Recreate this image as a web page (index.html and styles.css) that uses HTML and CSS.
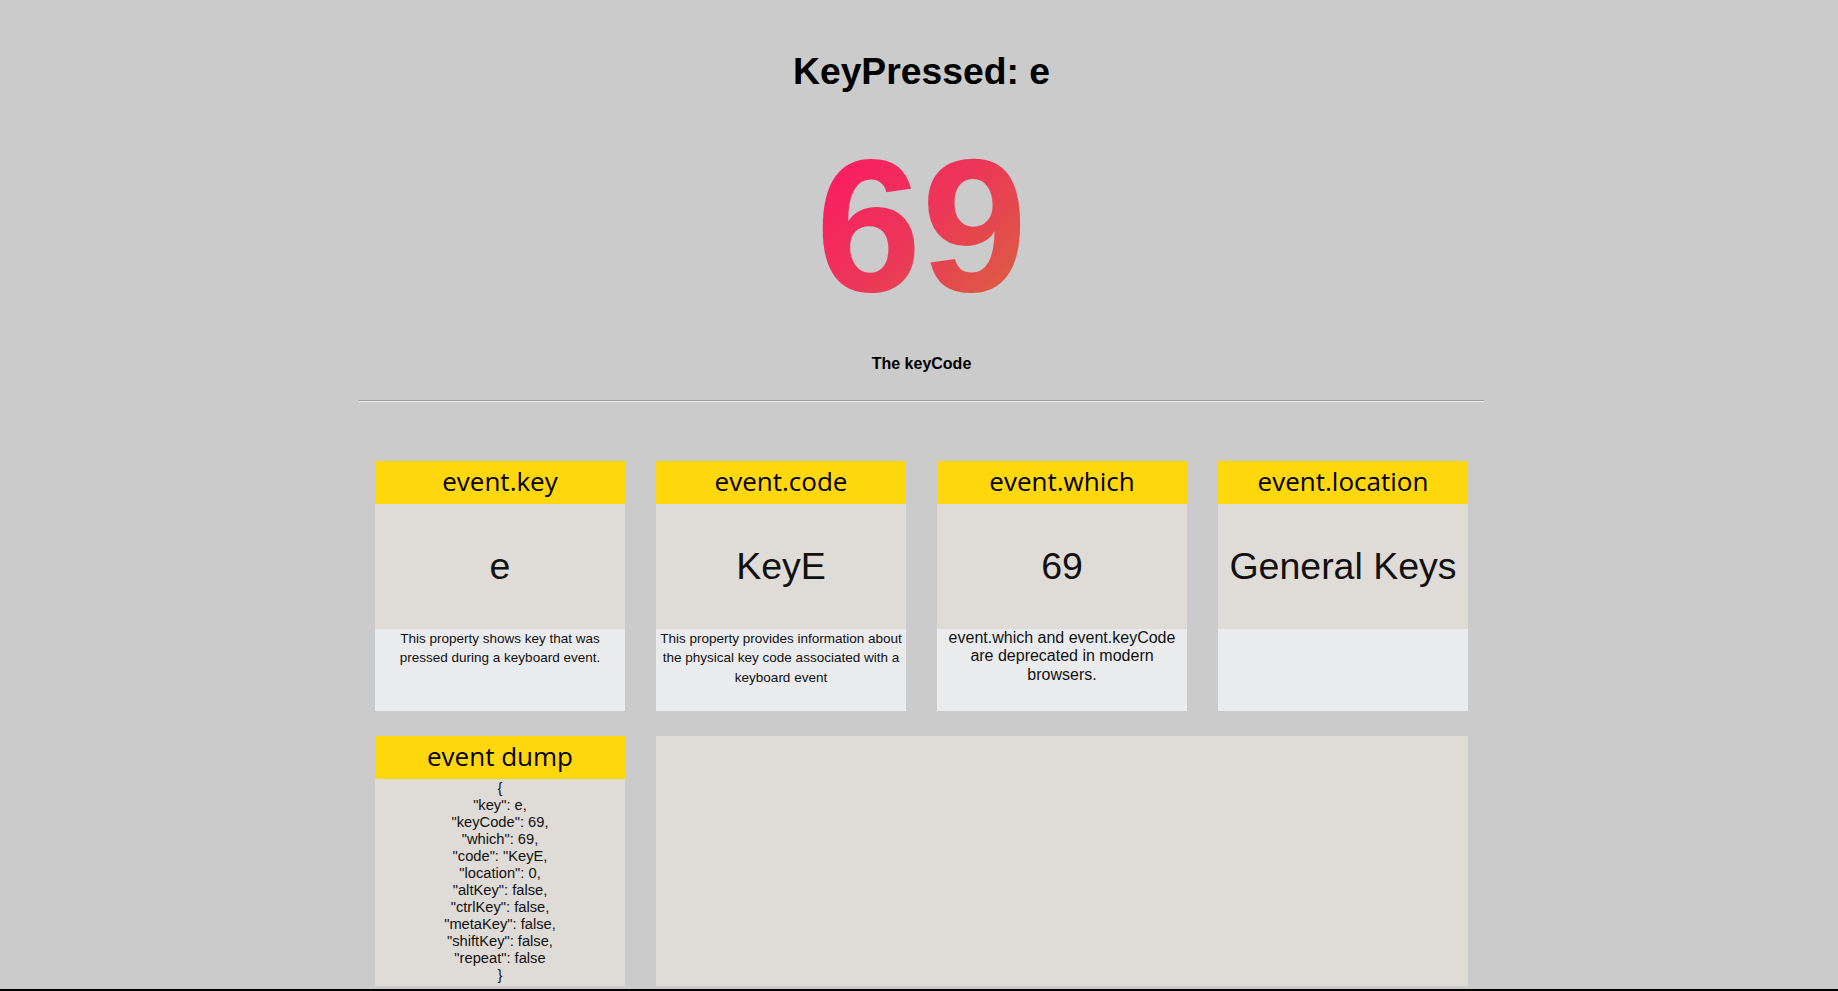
FILE: index.html
```html
<!DOCTYPE html>
<html lang="en">
<head>
<meta charset="utf-8">
<title>KeyCode</title>
<link rel="stylesheet" href="styles.css">
</head>
<body>
<main class="page">
  <h1 class="title">KeyPressed: e</h1>
  <div class="code-wrap"><span class="code">69</span></div>
  <p class="code-label">The keyCode</p>
  <div class="container">
    <hr class="divider">
    <section class="grid">
      <div class="card">
        <div class="card-head">event.key</div>
        <div class="card-value">e</div>
        <div class="card-desc"><small>This property shows key that was pressed during a keyboard event.</small></div>
      </div>
      <div class="card">
        <div class="card-head">event.code</div>
        <div class="card-value">KeyE</div>
        <div class="card-desc"><small>This property provides information about the physical key code associated with a keyboard event</small></div>
      </div>
      <div class="card">
        <div class="card-head">event.which</div>
        <div class="card-value">69</div>
        <div class="card-desc">event.which and event.keyCode are deprecated in modern browsers.</div>
      </div>
      <div class="card">
        <div class="card-head">event.location</div>
        <div class="card-value">General Keys</div>
        <div class="card-desc"></div>
      </div>
      <div class="card">
        <div class="card-head">event dump</div>
        <div class="card-dump">{<br>"key": e,<br>"keyCode": 69,<br>"which": 69,<br>"code": "KeyE,<br>"location": 0,<br>"altKey": false,<br>"ctrlKey": false,<br>"metaKey": false,<br>"shiftKey": false,<br>"repeat": false<br>}</div>
      </div>
      <div class="card card-wide"></div>
    </section>
  </div>
</main>
<div class="screen-edge"></div>
</body>
</html>
```

FILE: styles.css
```css
* { box-sizing: border-box; }

html, body {
  margin: 0;
  padding: 0;
}

body {
  background: #cbcbcb;
  color: #000;
  font-family: "Liberation Sans", Arial, sans-serif;
}

.page {
  margin-left: 5px;
  padding-top: 48.5px;
  text-align: center;
}

.title {
  margin: 0;
  font-size: 37.3px;
  line-height: 44px;
  font-weight: bold;
}

.code-wrap {
  margin-top: 32px;
  height: 200px;
}

.code {
  display: inline-block;
  font-size: 190px;
  line-height: 200px;
  font-weight: bold;
  background: linear-gradient(135deg, #ff1366 0%, #ec3758 50%, #d7683c 100%);
  -webkit-background-clip: text;
  background-clip: text;
  color: transparent;
}

.code-label {
  margin: 30.6px 0 0;
  font-size: 16px;
  line-height: 18px;
  font-weight: bold;
}

.container {
  width: 1125px;
  margin: 26.5px auto 0;
}

.divider {
  margin: 0;
  height: 0;
  border: 0;
  border-top: 1px solid #9d9d9d;
  border-bottom: 1px solid #f0f0f0;
}

.grid {
  display: grid;
  grid-template-columns: repeat(4, 250px);
  grid-auto-rows: 250px;
  column-gap: 31px;
  row-gap: 25px;
  padding: 0 16px;
  margin-top: 59px;
}

.card {
  display: flex;
  flex-direction: column;
  overflow: hidden;
}

.card-head {
  height: 43px;
  padding-bottom: 3px;
  background: #ffd70d;
  font-family: "Open Sans", "Liberation Sans", sans-serif;
  font-weight: 400;
  font-size: 26px;
  line-height: 40px;
  color: #000;
}

.card-value {
  height: 125px;
  background: #dfdcd8;
  display: flex;
  align-items: center;
  justify-content: center;
  font-size: 37.5px;
  color: #111;
}

.card-desc {
  flex: 1;
  background: #eaebed;
  padding: 0 3px;
  font-size: 16px;
  line-height: 18.6px;
  color: #111;
}

.card-desc small {
  font-size: 13.5px;
}

.card-dump {
  flex: 1;
  background: #dfdcd8;
  padding-top: 1px;
  font-size: 14.7px;
  line-height: 17.05px;
  color: #111;
}

.card-wide {
  grid-column: span 3;
  background: #dfdcd8;
}

.screen-edge {
  position: fixed;
  left: 0;
  right: 0;
  bottom: 0;
  height: 2px;
  background: #000;
}
```
